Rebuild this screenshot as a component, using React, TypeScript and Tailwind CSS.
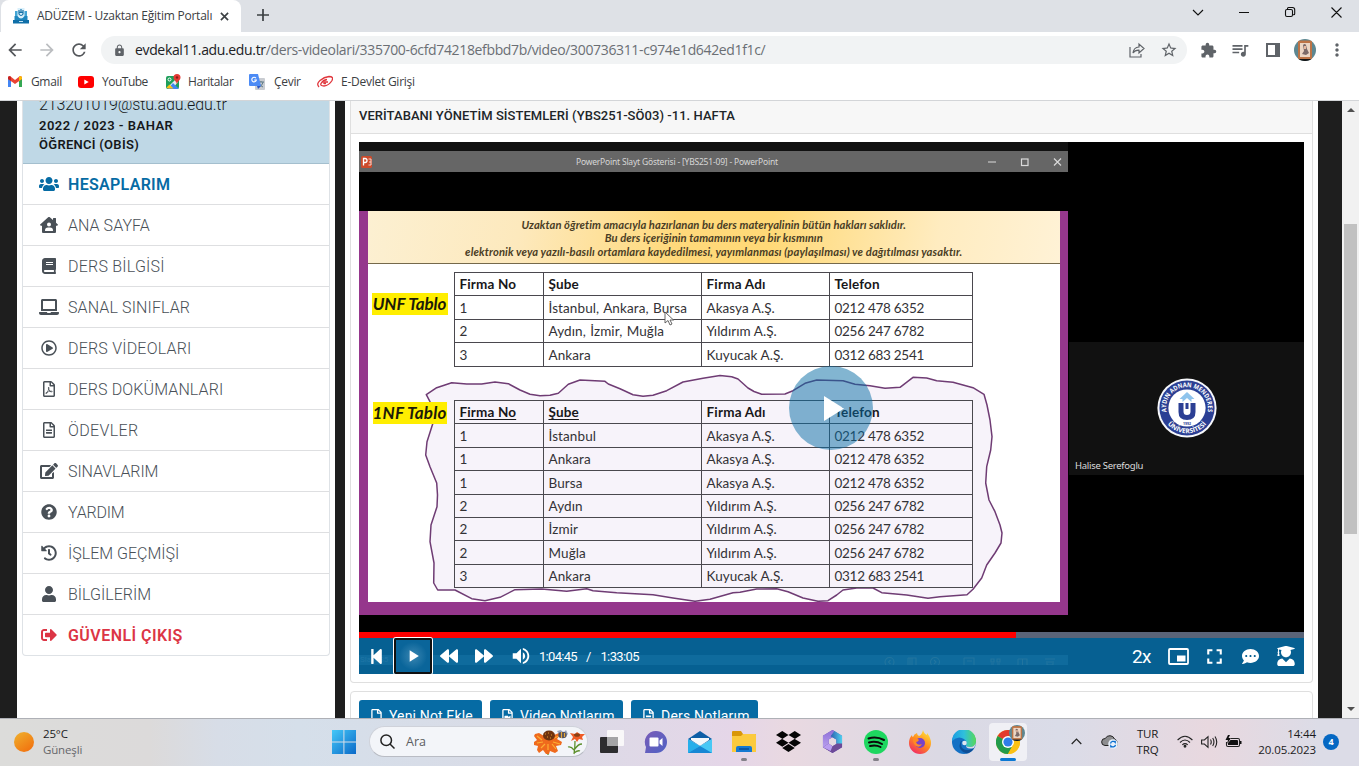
import React from "react";
import {
  FaUsers, FaHouseUser, FaBook, FaLaptop, FaRegPlayCircle, FaRegFilePdf, FaRegFileAlt, FaEdit,
  FaQuestionCircle, FaHistory, FaUser, FaSignOutAlt, FaBackward, FaForward, FaStepBackward,
  FaCommentDots, FaUserGraduate, FaRegFile, FaRegFileVideo, FaDropbox,
} from "react-icons/fa";
import {
  MdArrowBack, MdArrowForward, MdRefresh, MdLock, MdStarBorder, MdExtension, MdQueueMusic,
  MdMoreVert, MdVolumeUp, MdFullscreen, MdPlayArrow,
} from "react-icons/md";

const menu = [
  { icon: FaHouseUser, size: "h-4 w-[18px]", label: "ANA SAYFA", cls: "tracking-[0.05px]" },
  { icon: FaBook, size: "h-4 w-4", label: "DERS BİLGİSİ", cls: "tracking-[0.22px]" },
  { icon: FaLaptop, size: "h-5 w-5", label: "SANAL SINIFLAR", cls: "tracking-[0.12px]" },
  { icon: FaRegPlayCircle, size: "h-4 w-4", label: "DERS VİDEOLARI", cls: "tracking-[0.2px]" },
  { icon: FaRegFilePdf, size: "h-4 w-4", label: "DERS DOKÜMANLARI", cls: "tracking-[0.12px]" },
  { icon: FaRegFileAlt, size: "h-4 w-4", label: "ÖDEVLER", cls: "tracking-[0.35px]" },
  { icon: FaEdit, size: "h-[18px] w-[18px]", label: "SINAVLARIM", cls: "tracking-[-0.1px]" },
  { icon: FaQuestionCircle, size: "h-4 w-4", label: "YARDIM", cls: "tracking-[-0.2px]" },
  { icon: FaHistory, size: "h-4 w-4", label: "İŞLEM GEÇMİŞİ", cls: "tracking-[0px]" },
  { icon: FaUser, size: "h-4 w-4", label: "BİLGİLERİM", cls: "tracking-[0px]" },
];

const head = ["Firma No", "Şube", "Firma Adı", "Telefon"];
const unf = [
  ["1", "İstanbul, Ankara, Bursa", "Akasya A.Ş.", "0212 478 6352"],
  ["2", "Aydın, İzmir, Muğla", "Yıldırım A.Ş.", "0256 247 6782"],
  ["3", "Ankara", "Kuyucak A.Ş.", "0312 683 2541"],
];
const nf1 = [
  ["1", "İstanbul", "Akasya A.Ş.", "0212 478 6352"],
  ["1", "Ankara", "Akasya A.Ş.", "0212 478 6352"],
  ["1", "Bursa", "Akasya A.Ş.", "0212 478 6352"],
  ["2", "Aydın", "Yıldırım A.Ş.", "0256 247 6782"],
  ["2", "İzmir", "Yıldırım A.Ş.", "0256 247 6782"],
  ["2", "Muğla", "Yıldırım A.Ş.", "0256 247 6782"],
  ["3", "Ankara", "Kuyucak A.Ş.", "0312 683 2541"],
];

function Avatar({ className }: { className: string }) {
  return (
    <svg viewBox="0 0 22 22" className={className}>
      <defs>
        <clipPath id="av"><circle cx="11" cy="11" r="11" /></clipPath>
      </defs>
      <g clipPath="url(#av)">
        <rect width="22" height="22" fill="#5d8791" />
        <rect x="4" y="1.5" width="14" height="19" fill="#bd7446" />
        <rect x="6" y="4" width="10" height="14" fill="#ecd6c4" />
        <path d="M9 6q2-2 3 0l1 4 2 4-3 2-4-1 2-3z" fill="#7c6a68" />
        <path d="M10 7h2v3h-2z" fill="#e9b9a0" />
        <rect y="20" width="22" height="2" fill="#141414" />
      </g>
    </svg>
  );
}

function Browser() {
  return (
    <header className="flex h-[101px] shrink-0 flex-col border-b border-[#d3d5d8] bg-white font-['Open_Sans','Noto_Sans',sans-serif]">
      <div className="flex h-8 bg-[#dee1e6]">
        <div className="ml-px flex h-8 w-60 items-center rounded-t-lg bg-white pl-3">
          <svg viewBox="0 0 16 16" className="h-4 w-4">
            <path d="M2 3h3v8H2zM11 3h3v8h-3z" fill="#43a5d4" />
            <path d="M1.500 8h13v4h-13z" fill="#1f86bd" />
            <path d="M0 12h16v3.500H0z" fill="#0f6fa8" />
            <path d="M4.500 0h7v8q-3.500 5-7 0z" fill="#d9f0fb" />
            <path d="M6 2v4q2 3 4 0V2M6 4.300h4M8 1v4" fill="none" stroke="#1772a8" strokeWidth="1.200" />
            <path d="M6 13h4v1H6z" fill="#bfe3f5" />
          </svg>
          <span className="ml-2 w-[176px] whitespace-nowrap text-[12px] leading-none tracking-[-0.23px] text-[#3c4043]">ADÜZEM - Uzaktan Eğitim Portalı</span>
          <svg viewBox="0 0 10 10" className="ml-[7px] h-[9px] w-[9px]"><path d="M1 1l8 8M9 1l-8 8" stroke="#3c4043" strokeWidth="1.800" /></svg>
        </div>
        <svg viewBox="0 0 12 12" className="ml-[16px] mt-[9px] h-3 w-3"><path d="M6 0v12M0 6h12" stroke="#3c4043" strokeWidth="1.700" /></svg>
        <svg viewBox="0 0 150 12" className="ml-auto mr-[17px] mt-[6px] h-3 w-[150px]" fill="none" stroke="#111" strokeWidth="1.100">
          <path d="M1 4l5 5 5-5M47 6.500h10" />
          <rect x="93.500" y="3.500" width="7" height="7" rx="1.500" />
          <path d="M95.500 3.200v-.7q0-1 1-1h4q2.200 0 2.200 2.200v4q0 1-1 1h-.7M139.500 1.500l10 10M149.500 1.500l-10 10" />
        </svg>
      </div>
      <div className="flex h-9 items-center">
        <MdArrowBack className="ml-[5px] h-5 w-5 text-[#54575b]" />
        <MdArrowForward className="ml-3 h-5 w-5 text-[#bbbdc0]" />
        <MdRefresh className="ml-3 h-5 w-5 text-[#54575b]" />
        <div className="ml-3 flex h-7 w-[1086px] items-center rounded-full bg-[#f1f3f4] pl-3">
          <MdLock className="h-[13px] w-[13px] text-[#5f6368]" />
          <span className="ml-[9px] whitespace-nowrap text-[14px] leading-none tracking-[-0.35px] text-[#6b6f74]">
            <span className="text-[#202124]">evdekal11.adu.edu.tr</span>/ders-videolari/335700-6cfd74218efbbd7b/video/300736311-c974e1d642ed1f1c/
          </span>
          <svg viewBox="0 0 16 16" className="ml-auto h-4 w-4" fill="none" stroke="#5f6368" strokeWidth="1.200">
            <path d="M1 5v10h11v-3M4 11q.5-5.500 6-6V2l5 4.500-5 4.500V8.200Q6 8 4 11z" />
          </svg>
          <MdStarBorder className="ml-[15px] mr-[9px] h-[18px] w-[18px] text-[#5f6368]" />
        </div>
        <MdExtension className="ml-[13px] h-[17px] w-[17px] text-[#5f6368]" />
        <MdQueueMusic className="ml-[13px] h-5 w-5 text-[#5f6368]" />
        <svg viewBox="0 0 14 14" className="ml-4 h-[14px] w-[14px]"><path fillRule="evenodd" d="M0 0h14v14H0zM2 2v10h7V2z" fill="#5f6368" /></svg>
        <Avatar className="ml-[14px] h-[22px] w-[22px]" />
        <MdMoreVert className="ml-[11px] h-5 w-5 text-[#5f6368]" />
      </div>
      <div className="flex h-[27px] items-center whitespace-nowrap text-[12px] leading-none text-[#3c4043]">
        <svg viewBox="0 0 14 11" className="ml-2 h-[11px] w-[14px]">
          <path d="M0 1.500V11h3V5z" fill="#4285f4" /><path d="M11 5v6h3V1.500z" fill="#34a853" />
          <path d="M0 1.500Q0 0 2 0l5 4 5-4q2 0 2 1.500V3L7 8 0 3z" fill="#ea4335" /><path d="M11 1l1-1q2 0 2 1.500V3l-3 2z" fill="#fbbc04" />
          <path d="M0 3v-1.500Q0 0 2 .2l1 .8v4z" fill="#c5221f" />
        </svg>
        <span className="ml-[9px] w-[31px] tracking-[-0.35px]">Gmail</span>
        <svg viewBox="0 0 16 12" className="ml-4 h-3 w-4"><rect width="16" height="12" rx="3" fill="#f00" /><path d="M6.300 3.500v5L10.700 6z" fill="#fff" /></svg>
        <span className="ml-2 w-[46px] tracking-[-0.5px]">YouTube</span>
        <svg viewBox="0 0 16 16" className="ml-[17px] h-4 w-4">
          <rect x="1" y="2" width="13" height="13" rx="2" fill="#1e9e5a" />
          <path d="M2 14L13 3v5l-5 6z" fill="#e8eef0" /><path d="M8 9l6 6H3z" fill="#4285f4" /><path d="M1.500 13.500l3-3 4 4H3z" fill="#fbc116" />
          <path d="M12 0a3.500 3.500 0 013.500 3.500c0 2.500-3 3.500-3.500 7-.5-3.500-3.500-4.500-3.500-7A3.500 3.500 0 0112 0z" fill="#e53a35" /><circle cx="12" cy="3.500" r="1.200" fill="#8c1d18" />
          <circle cx="4.500" cy="5.500" r="1.500" fill="none" stroke="#fff" />
        </svg>
        <span className="ml-[7px] w-[46px] tracking-[-0.4px]">Haritalar</span>
        <svg viewBox="0 0 16 16" className="ml-[15px] h-4 w-4">
          <rect x="6" y="4" width="10" height="12" rx="1" fill="#c9ccd1" /><path d="M9 8h6M12 7v1M10 13q4-2 4-5M10 9q1 3 4 4" stroke="#5f7b87" fill="none" />
          <path d="M1 0h8l3 12H1q-1 0-1-1V1q0-1 1-1z" fill="#4c8bf5" /><path d="M8 12h4l-3 3z" fill="#2a56c6" />
          <path d="M7 4.200A2.300 2.300 0 107.400 6H5.200" stroke="#fff" fill="none" strokeWidth="1.100" />
        </svg>
        <span className="ml-[9px] w-[27px] tracking-[-0.3px]">Çevir</span>
        <svg viewBox="0 0 16 14" className="ml-4 h-[14px] w-4" fill="none" stroke="#e0363c">
          <path d="M2 12Q-1 9 3 5.500T12 1.500q5 0 3 4-3 5-8 5.500-4 0-3-2.500 2-3.500 6-4" strokeWidth="1.300" /><path d="M11 7H7q-1 2 2 1.500" strokeWidth="1.300" />
        </svg>
        <span className="ml-2 tracking-[-0.25px]">E-Devlet Girişi</span>
      </div>
    </header>
  );
}

function Sidebar() {
  return (
    <aside className="ml-[17px] w-[318px] shrink-0 bg-white px-[5px]">
      <div className="flex h-[555px] flex-col overflow-hidden rounded-b border border-t-0 border-[#dee2e6]">
        <div className="h-[63px] shrink-0 overflow-hidden border-b border-[#a4bfce] bg-[#bfd8e6] pl-4 text-[#16181b]">
          <p className="-mt-[7px] h-[22px] whitespace-nowrap text-[16px] font-light leading-[22px] tracking-[-0.13px]">213201019@stu.adu.edu.tr</p>
          <p className="text-[13px] font-semibold leading-[19px] tracking-[0.48px]">2022 / 2023 - BAHAR</p>
          <p className="text-[13px] font-semibold leading-[19px] tracking-[0.28px]">ÖĞRENCİ (OBİS)</p>
        </div>
        <nav className="flex flex-col">
          <div className="flex h-[41px] items-center border-b border-[#dedfe1] pl-4 text-[#066ba4]">
            <FaUsers className="h-5 w-5" />
            <span className="ml-[9px] pt-[2px] text-[16px] font-semibold leading-none tracking-[0.3px]">HESAPLARIM</span>
          </div>
          {menu.map(({ icon: Icon, size, label, cls }) => (
            <div key={label} className="flex h-[41px] items-center border-b border-[#dedfe1] pl-4 text-[#495057]">
              <span className="flex w-5 justify-center"><Icon className={size} /></span>
              <span className={"ml-[9px] pt-[2px] text-[16px] font-light leading-none " + cls}>{label}</span>
            </div>
          ))}
          <div className="flex h-10 items-center pl-4 text-[#dc3545]">
            <span className="flex w-5 justify-center"><FaSignOutAlt className="h-4 w-4" /></span>
            <span className="ml-[9px] pt-[2px] text-[16px] font-semibold leading-none tracking-[0.45px]">GÜVENLİ ÇIKIŞ</span>
          </div>
        </nav>
      </div>
    </aside>
  );
}

const colTone = ["", "tracking-[0.1px] [word-spacing:0.8px]", "tracking-[0.05px]", "tracking-[-0.27px]"];
const headTone = ["tracking-[0.15px]", "tracking-[0.15px]", "tracking-[0.2px]", "tracking-[0.15px]"];

function SlideTable({ rows, keyed }: { rows: string[][]; keyed?: boolean }) {
  return (
    <div className="w-[519.5px] border-l border-t border-[#4a484e] text-[13.500px] leading-none text-[#333236]">
      {[head, ...rows].map((row, r) => (
        <div key={r} className="grid h-[23.4px] grid-cols-[89px_158px_128px_143.5px]">
          {row.map((cell, c) => (
            <div key={c} className="flex items-center whitespace-nowrap border-b border-r border-[#4a484e] pl-[5px] pt-[2px]">
              <span className={r === 0 ? headTone[c] + (keyed && c < 2 ? " font-bold text-[#18171a] underline underline-offset-2" : " font-bold text-[#18171a]") : colTone[c]}>{cell}</span>
            </div>
          ))}
        </div>
      ))}
    </div>
  );
}

const cloud =
  "426.3,394.7 436.7,387.7 451.7,382.7 466.7,384 481.7,384 495,382 508.3,383.7 520,390 530,394.3 540,395.7 550,395.3 558.3,393.3 568.3,384.3 580,380 605,381.3 608.3,384 620,388.7 633,394.7 643,396.3 653,395.3 666.7,390.7 683,382 703,378.3 720,375.6 731.7,376.7 738,379 748,388 754,391.500 761.7,394.300 785,394 793,390.7 805,383.3 816.7,380 843,380.7 855,384.3 870,385.7 885,388.3 900,387.3 913,377.3 926.7,378 936.7,380.7 953,382.3 973,387.7 984,394.3 987,405 990,420 992,436.7 990.7,450 986.7,466.7 985.7,483 989,500 995,511.7 1000,525 1002,533 1001,543 995,553 986.7,565 981.7,578 973,589.3 967,594.7 940,596.7 928,598.3 906.7,595 881.7,592.7 873,588 856.7,588 843,590 836.7,595 828,600.7 818,601.3 803,598 788,591.7 776.7,588.7 756.7,589 740,592.2 733,592.7 710,599.3 695,601.3 673,598 653,594.7 616.7,592.7 593,590.7 586.7,588.7 566.7,591.3 541.7,589 515,589.7 500,597.3 485,600.7 471.7,598.7 455,590 437.7,590 433.7,583 434,563 430,541.7 431,525 437,506.7 437.500,495 436.7,483 430,466.7 425.7,455 427,441.7 433,423 430,401.7";

function Slide() {
  return (
    <div className="relative flex h-[490px] w-[709px] flex-col bg-black font-['Lato',sans-serif]">
      <div className="h-[9px] bg-[#111]" />
      <div className="flex h-[21px] items-center bg-[#666] font-['Noto_Sans',sans-serif]">
        <svg viewBox="0 0 14 12" className="ml-[2px] h-3 w-[14px]"><rect width="11" height="12" rx="1.500" fill="#cc4b2c" /><path d="M2.500 9.500v-7h1.500q2 0 2 2t-2 2H2.500" stroke="#fff" fill="none" strokeWidth="1.300" /><path d="M7.500 3H10v6H7.500M8 6h2" stroke="#f3d5cc" fill="none" /></svg>
        <span className="ml-[201px] whitespace-nowrap pt-px text-[8.500px] leading-none tracking-[-0.2px] text-[#d6d6d6]">PowerPoint Slayt Gösterisi - [YBS251-09] - PowerPoint</span>
        <svg viewBox="0 0 76 10" className="ml-auto mr-[5px] h-[10px] w-[76px]" fill="none" stroke="#dadada" strokeWidth="1.200"><path d="M1 5h8M67 1.500l7 7M74 1.500l-7 7" /><rect x="34.500" y="2" width="6.500" height="6.500" /></svg>
      </div>
      <div className="mt-[39px] flex h-[404px] flex-col bg-[#95378c] pl-[8.500px] pr-2">
        <div className="flex h-[53px] flex-col items-center border-b border-[#75694b] bg-[linear-gradient(100deg,#fcf0d2_0%,#fde9bd_22%,#ffd97b_45%,#ffd977_58%,#ffecc0_82%,#fff2d6_100%)] pt-[7px] text-[11.200px] font-bold italic leading-[13.300px] text-[#4a3d25]">
          <p className="whitespace-nowrap tracking-[0.07px]">Uzaktan öğretim amacıyla hazırlanan bu ders materyalinin bütün hakları saklıdır.</p>
          <p className="whitespace-nowrap tracking-[0.07px]">Bu ders içeriğinin tamamının veya bir kısmının</p>
          <p className="whitespace-nowrap tracking-[0.13px]">elektronik veya yazılı-basılı ortamlara kaydedilmesi, yayımlanması (paylaşılması) ve dağıtılması yasaktır.</p>
        </div>
        <div className="relative h-[338px] bg-white">
          <svg viewBox="368 264 692 338" className="absolute inset-0 h-[338px] w-[692px]">
            <polygon points={cloud} fill="#f7f3fa" stroke="#6f3c74" strokeWidth="1.500" strokeLinejoin="round" />
          </svg>
          <div className="relative flex pt-[8px]">
            <div className="w-[86px] pl-[4px] pt-[21px]"><span className="flex h-[22px] w-[76px] items-center justify-center whitespace-nowrap bg-[#ffee00] text-[17px] font-bold italic tracking-[-0.1px] text-[#1c1b08]">UNF Tablo</span></div>
            <SlideTable rows={unf} />
          </div>
          <div className="relative mt-[33.400px] flex">
            <div className="w-[86px] pl-[5px] pt-[2px]"><span className="flex h-[22px] w-[74px] items-center justify-center whitespace-nowrap bg-[#ffee00] text-[17px] font-bold italic tracking-[0.15px] text-[#1c1b08]">1NF Tablo</span></div>
            <SlideTable rows={nf1} keyed />
          </div>
          <svg viewBox="0 0 10 15" className="absolute left-[296px] top-[47px] h-[15px] w-[10px]"><path d="M1 1v11l3-2.500L6 14l2-1-2-4h3.500z" fill="#fff" stroke="#555" strokeWidth=".9" /></svg>
        </div>
      </div>
    </div>
  );
}

function Seal() {
  return (
    <svg viewBox="-30 -30 60 60" className="h-[60px] w-[60px] font-['Open_Sans',sans-serif]">
      <defs>
        <path id="sealTop" d="M-20.300 5A20.900 20.900 0 1 1 20.300 5" />
        <path id="sealBottom" d="M-21 14A25.300 25.300 0 0 0 21 14" />
      </defs>
      <circle r="29.600" fill="#f7f8fb" /><circle r="27.600" fill="#2b3f94" /><circle r="18.600" fill="#fff" />
      <text fill="#fff" className="text-[6.500px] font-bold"><textPath href="#sealTop" startOffset="50%" textAnchor="middle" textLength="73" lengthAdjust="spacingAndGlyphs">AYDIN ADNAN MENDERES</textPath></text>
      <text fill="#fff" className="text-[6.500px] font-bold"><textPath href="#sealBottom" startOffset="50%" textAnchor="middle" textLength="44" lengthAdjust="spacingAndGlyphs">ÜNİVERSİTESİ</textPath></text>
      <path d="M0-16l7.500 7H4.500v3L0-10l-4.500 4v-3h-3z" fill="#8fc4ec" />
      <path d="M-8.500-5h5V3.500q0 3.500 3.500 3.500T3.500 3.500V-5h5V4Q8.500 12 0 12T-8.500 4zM-1.500-5h3v6h-3z" fill="#2b3f94" />
      <text x="0" y="16.500" textAnchor="middle" fill="#2b3f94" className="text-[3.500px] font-bold">1992</text>
    </svg>
  );
}

function Video() {
  return (
    <div className="relative flex h-[532px] w-[945px] flex-col bg-black">
      <div className="flex h-[490px]">
        <Slide />
        <div className="ml-px mt-[200px] flex h-[133px] w-[235px] flex-col items-center bg-[#111]">
          <div className="mt-[36px]"><Seal /></div>
          <p className="mt-[21px] self-start pl-[6px] font-['Noto_Sans',sans-serif] text-[9.500px] leading-[13px] tracking-[-0.27px] text-[#dcdcdc]">Halise Serefoglu</p>
        </div>
      </div>
      <div className="flex h-[6px] bg-[#5a6478]"><div className="w-[657px] bg-[#ff0000]" /></div>
      <div className="relative flex h-9 items-center bg-[#066092] text-white">
        <div className="absolute left-0 top-[17px] flex h-[10px] w-[709px] items-center overflow-hidden bg-[#0f6b9d] pr-[12px] text-[#1f76a6]">
          <span className="mr-auto pl-px text-[8px] leading-none">Slayt 85 / 97</span>
          <svg viewBox="0 0 172 10" className="h-[10px] w-[172px]" fill="none" stroke="#22759f" strokeWidth="1.100">
            <circle cx="5.500" cy="7" r="4.500" /><path d="M6.500 5l-2 2 2 2M24 3h8v8M24 3v8M28 3v8M26 3v8" /><circle cx="51" cy="7" r="4.500" /><path d="M50 5l2 2-2 2M80 3h10v8M80 3v8M83 6h5" />
            <path d="M107 4h3v3h-3zM113 4h3v3h-3zM107 9h3M113 9h3M134 4h9v7M134 4v7M138.500 4v7M161 4h10M163 6v4h6V6M164 7h4" />
          </svg>
        </div>
        <div className="relative flex w-full items-center">
          <FaStepBackward className="ml-[9px] h-[17px] w-[17px]" />
          <div className="ml-[9px] flex h-9 w-[38px] items-center justify-center rounded-[2px] border-2 border-[#101010] bg-[radial-gradient(circle,#3a86b2_0%,#0a659a_60%)] ring-1 ring-white"><MdPlayArrow className="h-[20px] w-[20px]" /></div>
          <FaBackward className="ml-[8px] h-[18px] w-[18px]" />
          <FaForward className="ml-[17px] h-[18px] w-[18px]" />
          <MdVolumeUp className="ml-[17px] h-[22px] w-[22px]" />
          <span className="ml-[7px] w-[40px] text-[13px] leading-none tracking-[-0.7px]">1:04:45</span>
          <span className="ml-[7px] text-[13px] leading-none">/</span>
          <span className="ml-[9px] w-[42px] text-[13px] leading-none tracking-[-0.6px]">1:33:05</span>
          <span className="ml-auto text-[19px] leading-none tracking-[-0.500px]">2x</span>
          <svg viewBox="0 0 21 17" className="ml-[17px] h-[17px] w-[21px]"><rect x="1" y="1" width="19" height="15" rx="1" fill="none" stroke="#fff" strokeWidth="1.800" /><path d="M9 7.500h8.500v6H9z" fill="#fff" /></svg>
          <MdFullscreen className="ml-[13px] h-[25px] w-[25px]" />
          <FaCommentDots className="ml-[15px] h-[17px] w-[17px]" />
          <FaUserGraduate className="ml-[17px] mr-[8px] h-5 w-5" />
        </div>
      </div>
      <div className="absolute left-[430px] top-[224px] flex h-[84px] w-[84px] items-center justify-center rounded-full bg-[#066ba4]/50">
        <svg viewBox="0 0 20 25" className="ml-[6px] h-[25px] w-5"><path d="M0 0l20 12.500L0 25z" fill="#fff" /></svg>
      </div>
    </div>
  );
}

function Content() {
  return (
    <main className="ml-[10px] flex w-[973px] shrink-0 flex-col bg-white px-[5px]">
      <section className="h-[582px] shrink-0 rounded-b border border-t-0 border-[#dfdfdf]">
        <h1 className="h-[33px] whitespace-nowrap border-b border-[#dfdfdf] bg-[#f7f7f7] pl-2 text-[13px] font-medium leading-[30px] tracking-[0.05px] text-[#212529]">VERİTABANI YÖNETİM SİSTEMLERİ (YBS251-SÖ03) -11. HAFTA</h1>
        <div className="px-2 pt-2"><Video /></div>
      </section>
      <section className="mt-2 flex h-20 shrink-0 gap-2 rounded-t border border-[#dfdfdf] px-2 pt-2 text-[14px] leading-none text-white">
        <button className="flex h-[31px] w-[123px] items-center rounded-[3px] bg-[#066ba4] pl-3"><FaRegFile className="h-[14px] w-[11px]" /><span className="ml-[7px] whitespace-nowrap tracking-[0.15px]">Yeni Not Ekle</span></button>
        <button className="flex h-[31px] w-[133px] items-center rounded-[3px] bg-[#066ba4] pl-3"><FaRegFileVideo className="h-[14px] w-[11px]" /><span className="ml-[7px] whitespace-nowrap tracking-[0.1px]">Video Notlarım</span></button>
        <button className="flex h-[31px] w-[127px] items-center rounded-[3px] bg-[#066ba4] pl-3"><FaRegFileAlt className="h-[14px] w-[11px]" /><span className="ml-[7px] whitespace-nowrap tracking-[0.2px]">Ders Notlarım</span></button>
      </section>
    </main>
  );
}

function Cell({ children, dot }: { children: React.ReactNode; dot?: boolean }) {
  return (
    <div className="relative flex h-[46px] w-11 items-center justify-center">
      {children}
      {dot && <span className="absolute bottom-[4px] left-[19px] h-[3px] w-[6px] rounded-full bg-[#838088]" />}
    </div>
  );
}

function Taskbar() {
  return (
    <footer className="flex h-12 shrink-0 items-center border-t border-[#aeb0b6] bg-[linear-gradient(90deg,#dcdcda_0%,#dcdada_11%,#d7dde7_16%,#d5dfea_22%,#dadbe6_40%,#e5d6e8_54%,#e9d9e1_58%,#dbd9e4_69%,#dadce8_78%,#e8d8df_89%,#dcdce7_97%)] pb-[2px] font-['Open_Sans','Noto_Sans',sans-serif] text-[11.500px] leading-4 text-[#1b1b1d]">
      <span className="ml-[14px] h-5 w-5 rounded-full bg-[linear-gradient(145deg,#efb22e,#f26a0b)]" />
      <div className="ml-[9px] w-[60px] tracking-[-0.15px]"><p>25°C</p><p className="text-[#66666a]">Güneşli</p></div>
      <svg viewBox="0 0 24 24" className="ml-[229px] h-6 w-6">
        <defs><linearGradient id="win" x1="0" y1="0" x2="1" y2="1"><stop stopColor="#45c8f8" /><stop offset="1" stopColor="#0a69c8" /></linearGradient></defs>
        <path d="M0 0h11.400v11.400H0zM12.400 0H24v11.400H12.400zM0 12.400h11.400V24H0zM12.400 12.400H24V24H12.400z" fill="url(#win)" />
      </svg>
      <div className="ml-[13px] flex h-[31px] w-[219px] items-center rounded-full border border-[#cfd2da] border-b-[#b9bcc4] bg-[#f3f5f9] pl-[10px]">
        <svg viewBox="0 0 15 15" className="h-[15px] w-[15px]" fill="none" stroke="#222" strokeWidth="1.500"><circle cx="6.200" cy="6.200" r="5.300" /><path d="M10 10l4.500 4.500" /></svg>
        <span className="ml-[11px] text-[12.500px] text-[#5c5d61]">Ara</span>
        <svg viewBox="0 0 52 26" className="ml-auto mr-[1px] h-[26px] w-[52px]">
          <path d="M14 20v6M41 12q0 8-1 13M41 20q3-5 7-5M40 21q-3-4-6-3M40 24q4-3 6-2" stroke="#5d8f2c" strokeWidth="1.300" fill="none" />
          <path d="M1 5l4-1 5 3 4-5 4 0 2 4 5-2 1 2-3 4 5 3-1 3-5 1 2 5-3 2-5-2-1 3-3 0-3-4-4 3-2-3 1-4-4-1 0-3 3-2-3-4z" fill="#ef6a1d" />
          <path d="M3 7l5 4M3 14l6-1M7 19l4-4M14 21v-6M22 20l-4-5M26 15l-7-2M25 7l-5 2" stroke="#fcae34" strokeWidth="1.200" />
          <ellipse cx="15" cy="6.500" rx="6" ry="5" fill="#70330f" /><path d="M11 5h1M14 4h1M17 6h1M13 8h1M16 9h1" stroke="#e39c31" />
          <path d="M23 2l4-1 2 3 3-3 2 4-3 3-4 0z" fill="#9aa6bd" /><ellipse cx="28.500" cy="6" rx="4.200" ry="3.200" fill="#4f5063" /><path d="M27.500 3v6M30.500 4v4" stroke="#e6a83a" strokeWidth="1.200" />
          <path d="M36 4l5 1 2-2 3 2 5 0-3 3 1 3-4-1-2 3-2-3-4 2 2-4z" fill="#ef5b25" /><ellipse cx="43" cy="6" rx="3" ry="1.800" fill="#8a3f14" />
        </svg>
      </div>
      <div className="ml-[2px] flex">
        <Cell><svg viewBox="0 0 24 24" className="h-6 w-6"><rect y="7" width="18" height="16" rx="1" fill="#2d2d2f" /><rect x="7" width="17" height="16" rx="1" fill="#fbfbfb" fillOpacity=".92" /><rect x="7" y="7" width="11" height="9" fill="#a4a4a6" /></svg></Cell>
        <Cell><svg viewBox="0 0 24 24" className="h-6 w-6"><defs><linearGradient id="ch" x1="0" y1="0" x2="1" y2="1"><stop stopColor="#7a5cb8" /><stop offset="1" stopColor="#4f62c4" /></linearGradient></defs><path d="M12 1a11 11 0 110 22H1l1-6A11 11 0 0112 1z" fill="url(#ch)" /><rect x="5.500" y="7.500" width="9" height="9" rx="1" fill="#fff" /><path d="M15.500 10.500l3-2.500v8l-3-2.500z" fill="#fff" /></svg></Cell>
        <Cell><svg viewBox="0 0 24 22" className="h-[22px] w-6"><path d="M0 8l12-8 12 8-12 7z" fill="#0e5ea6" /><path d="M3 7h18v2l-9 6-9-6z" fill="#f4f8fb" /><path d="M0 8l12 7v7H0z" fill="#27aeea" /><path d="M24 8v14H0z" fill="#48c8f5" /><path d="M0 22l12-7 12 7z" fill="#1787d4" /></svg></Cell>
        <Cell dot><svg viewBox="0 0 24 22" className="h-[22px] w-6"><path d="M0 1q0-1 1-1h8l2 3h12q1 0 1 1v4H0z" fill="#d9970a" /><path d="M0 5h9l2-2h12q1 0 1 1v17H0z" fill="#fbca3e" /><path d="M4 21v-4q0-2 2-2h12q2 0 2 2v4z" fill="#1579d1" /><path d="M7 18h10" stroke="#0b57a5" strokeWidth="2" /></svg></Cell>
        <Cell><FaDropbox className="h-[25px] w-[25px] text-[#050505]" /></Cell>
        <Cell><svg viewBox="0 0 22 24" className="h-[23px] w-[21px]"><defs><linearGradient id="mA" x1="0" y1="0" x2="0" y2="1"><stop stopColor="#8f6fd8" /><stop offset="1" stopColor="#b9a2ee" /></linearGradient><linearGradient id="mB"><stop stopColor="#2c5fae" /><stop offset="1" stopColor="#4fd0ef" /></linearGradient></defs><path fillRule="evenodd" d="M11 0l10 6v12l-10 6L1 18V6zM11 7.500L7 10v4.500l4 2.500 4-2.500V10z" fill="#6554b4" /><path d="M11 0L1 6v12l6 1v-9l6-4V1z" fill="url(#mA)" /><path d="M13 1l8 5v10l-6-2v-4L9 6.500z" fill="url(#mB)" /><path d="M21 14v4l-10 6-10-6 6-4 4 3 5-3z" fill="#6d4a98" /><path d="M1 18l6-4 4 3-2 5z" fill="#b99df0" /></svg></Cell>
        <Cell dot><svg viewBox="0 0 24 24" className="h-6 w-6"><circle cx="12" cy="12" r="12" fill="#1ed760" /><path d="M4.500 8.500q8-2.500 15.500 1.500M5 12.500q7-2 13 1.500M6 16q6-1.500 10.500 1" fill="none" stroke="#0b0b0b" strokeWidth="2" strokeLinecap="round" /></svg></Cell>
        <Cell><svg viewBox="0 0 24 24" className="h-6 w-6"><defs><linearGradient id="ff" x1=".8" y1="0" x2=".2" y2="1"><stop stopColor="#ffe63a" /><stop offset=".5" stopColor="#ff8a1e" /><stop offset="1" stopColor="#f0246a" /></linearGradient></defs><path d="M15 0q1 4 4 5 0-1 0-2 4 5 4 10A11 11 0 111 13q0-5 3-8 0 2 1 2 1-3 4-4 0 2 2 3 3-1 4-6z" fill="url(#ff)" /><circle cx="12" cy="13" r="5" fill="#7843c9" /><path d="M5 9q4-2 6 1-1 2-3 2 1 4 6 2-2 4-6 2-3-2-3-7z" fill="#ff8a24" /></svg></Cell>
        <Cell><svg viewBox="0 0 24 24" className="h-6 w-6"><defs><linearGradient id="ed"><stop stopColor="#1b9ce2" /><stop offset=".5" stopColor="#2fc0dc" /><stop offset="1" stopColor="#57d957" /></linearGradient></defs><circle cx="12" cy="12" r="12" fill="#1470c4" /><path d="M0 11A12 12 0 0124 11q0 6-6 6-4 0-4-2 2-3-2-6-6-4-12 2z" fill="url(#ed)" /><path d="M9 11q-3 5 0 9 3 4 7 3 4-1 6-5-3 2-6 2-7 0-7-6 0-2 1-3z" fill="#0d4e96" /><path d="M24 12q-1 5-6 5-5 0-4-3-1 6 8 4 2-3 2-6z" fill="#dbd9e4" /><circle cx="12.500" cy="13" r="2.300" fill="#dfe6f2" /></svg></Cell>
        <Cell>
          <div className="relative flex h-[38px] w-[38px] items-center justify-center rounded bg-[#f0f0f5]">
            <svg viewBox="0 0 24 24" className="h-6 w-6"><circle cx="12" cy="12" r="12" fill="#fbc116" /><path d="M12 12L1.600 6A12 12 0 0122.400 6z" fill="#e33b2e" /><path d="M1.600 6A12 12 0 0012 24l5-9-5-3z" fill="#229b4c" /><path d="M12 6h10.400A12 12 0 0112 24l5-9z" fill="#fbc116" /><circle cx="12" cy="12" r="6" fill="#fff" /><circle cx="12" cy="12" r="4.600" fill="#2f7de9" /></svg>
            <Avatar className="absolute right-[2px] top-[2px] h-4 w-4" />
            <span className="absolute bottom-0 h-[3px] w-4 rounded-full bg-[#0b78d4]" />
          </div>
        </Cell>
      </div>
      <svg viewBox="0 0 11 7" className="ml-[41px] h-[7px] w-[11px]"><path d="M.7 6l4.800-5 4.800 5" fill="none" stroke="#222" strokeWidth="1.200" /></svg>
      <svg viewBox="0 0 17 15" className="ml-[19px] h-[15px] w-[17px]"><path d="M4 11.500a3.500 3.500 0 01.3-7A5 5 0 0113.500 5Q16 6 16 8v3.500z" fill="#8d8d8f" stroke="#222" /><circle cx="12" cy="10" r="4.800" fill="#e8f1fb" /><path d="M9.500 9.500a2.700 2.700 0 014.700-1.200V6.700M14.500 10.800a2.700 2.700 0 01-4.700 1.200v1.600" fill="none" stroke="#0a6fd0" strokeWidth="1.300" /></svg>
      <div className="ml-[14px] w-[31px] text-center tracking-[-0.2px]"><p>TUR</p><p>TRQ</p></div>
      <svg viewBox="0 0 16 13" className="ml-[14px] h-[13px] w-4" fill="none" stroke="#222" strokeWidth="1.100"><path d="M.6 5Q8-2.500 15.400 5M3 7.500q5-5 10 0M5.300 9.800q2.700-2.500 5.400 0" /><circle cx="8" cy="11.200" r=".9" fill="#222" /></svg>
      <svg viewBox="0 0 17 14" className="ml-2 h-[14px] w-[17px]" fill="none" stroke="#222" strokeWidth="1.100"><path d="M.6 5v4h2.800L7 12.300V1.700L3.400 5zM9.500 4.500q1.500 2.500 0 5M11.700 3q2.500 4 0 8M14 1.500q3.500 5.500 0 11" /></svg>
      <svg viewBox="0 0 17 13" className="ml-[7px] h-[13px] w-[17px]"><path d="M6 3.500h7q1.500 0 1.500 1.500v5q0 1.500-1.500 1.500H3Q1.500 11.500 1.500 10V7" fill="none" stroke="#222" strokeWidth="1.100" /><path d="M5.500 5H12q1 0 1 1v4H3V8zM15 6h1.500v3H15zM3 0L.5 5H3L2 9l4-6H3.500L5 0z" fill="#111" /></svg>
      <div className="ml-auto text-right tracking-[-0.1px]"><p>14:44</p><p>20.05.2023</p></div>
      <span className="ml-[7px] mr-5 flex h-4 w-4 items-center justify-center rounded-full bg-[#0568c3] text-[9px] font-bold text-white">4</span>
    </footer>
  );
}

export default function App() {
  return (
    <div className="flex h-[766px] w-[1359px] flex-col overflow-hidden bg-white">
      <Browser />
      <div className="flex h-[617px] overflow-hidden bg-[#1e1e1e] font-['Roboto',sans-serif]">
        <Sidebar />
        <Content />
        <div className="ml-auto flex w-[17px] flex-col items-center bg-[#f1f1f1]">
          <svg viewBox="0 0 8 4" className="mt-[7px] h-1 w-2"><path d="M0 4l4-4 4 4z" fill="#505050" /></svg>
          <span className="mt-[112px] h-[310px] w-[13px] bg-[#c1c1c1]" />
          <svg viewBox="0 0 8 4" className="mb-[7px] mt-auto h-1 w-2"><path d="M0 0l4 4 4-4z" fill="#505050" /></svg>
        </div>
      </div>
      <Taskbar />
    </div>
  );
}
